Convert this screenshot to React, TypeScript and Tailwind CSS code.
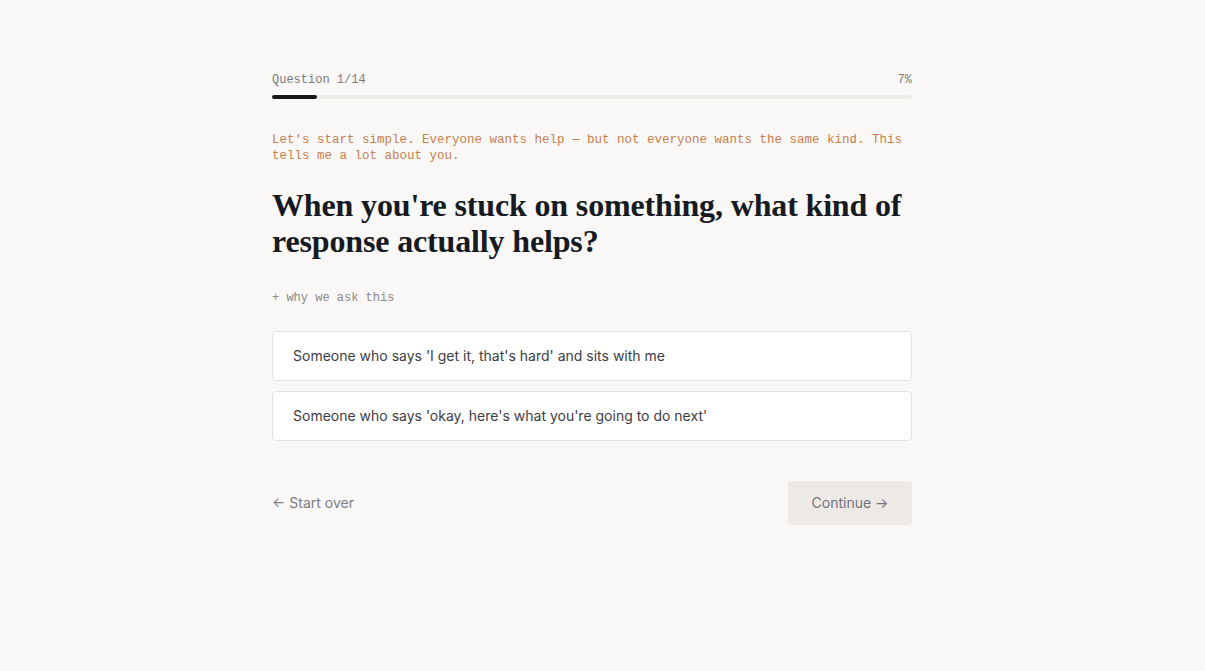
const OPTIONS = [
  "Someone who says 'I get it, that's hard' and sits with me",
  "Someone who says 'okay, here's what you're going to do next'",
];

export default function App() {
  const progress = 7;

  return (
    <div className="min-h-screen bg-[#f9f8f6] pr-[21px] font-['Inter',sans-serif]">
      <div className="mx-auto w-[640px] pt-[72px]">
        <div className="flex items-center justify-between font-['Liberation_Mono',monospace] text-[12px] leading-4 text-[#7a7a7a]">
          <span>Question 1/14</span>
          <span>{progress}%</span>
        </div>
        <div className="mt-[7px] h-1 w-full rounded-full bg-[#eeece9]">
          <div className="h-1 rounded-full bg-[#17171a]" style={{ width: `${progress}%` }} />
        </div>

        <p className="mt-[33px] font-['Liberation_Mono',monospace] text-[12.5px] leading-4 text-[#c7804f]">
          Let's start simple. Everyone wants help — but not everyone wants the same kind. This tells me a lot about you.
        </p>

        <h1 className="mt-[23px] font-['Liberation_Serif',serif] text-[32px] font-bold leading-9 tracking-[-0.15px] text-[#161a22]">
          When you're stuck on something, what kind of response actually helps?
        </h1>

        <button className="mt-[31px] block font-['Liberation_Mono',monospace] text-[12px] leading-4 text-[#8a8a8a]">
          + why we ask this
        </button>

        <div className="mt-[25px] flex flex-col gap-[10px]">
          {OPTIONS.map((opt) => (
            <button
              key={opt}
              className="w-full rounded-[4px] border border-[#e4e2df] bg-white px-5 py-[14px] text-left text-[14px] leading-5 text-[#3d3d42]"
            >
              {opt}
            </button>
          ))}
        </div>

        <div className="mt-10 flex items-center justify-between">
          <button className="text-[14px] leading-5 text-[#7d7d82]">← Start over</button>
          <button className="h-11 w-[124px] rounded-[4px] bg-[#edeae6] text-[14px] leading-5 text-[#6f7178]">
            Continue →
          </button>
        </div>
      </div>
    </div>
  );
}
